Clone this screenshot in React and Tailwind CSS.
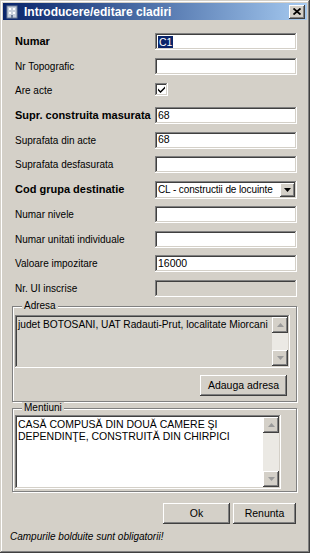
import React from 'react';

const raised =
  'bg-[#d4d0c8] shadow-[inset_-1px_-1px_0_#404040,inset_1px_1px_0_#fff,inset_-2px_-2px_0_#808080,inset_2px_2px_0_#d4d0c8]';
const sunken =
  'shadow-[inset_-1px_-1px_0_#fff,inset_1px_1px_0_#808080,inset_-2px_-2px_0_#d4d0c8,inset_2px_2px_0_#404040]';
const etched = 'border border-[#808080] shadow-[inset_1px_1px_0_#fff,1px_1px_0_#fff]';

function Arrow({ down = false, color = '#000' }) {
  return (
    <svg width="7" height="4" viewBox="0 0 7 4">
      <path d={down ? 'M0 0h7L3.5 4z' : 'M0 4h7L3.5 0z'} fill={color} />
    </svg>
  );
}

function ScrollButton({ down }) {
  return (
    <div className={`flex h-[16px] w-[16px] items-center justify-center ${raised}`}>
      <Arrow down={down} color="#9a9a9a" />
    </div>
  );
}

function ScrollBar() {
  return (
    <div className="flex w-[16px] shrink-0 flex-col">
      <ScrollButton />
      <div className="flex-1 bg-[#ebe9e4]" />
      <ScrollButton down />
    </div>
  );
}

function Field({ value, selected, disabled }) {
  return (
    <div
      className={`flex h-[17px] w-[142px] items-center px-[3px] text-[10.5px] ${sunken} ${
        disabled ? 'bg-[#d4d0c8]' : 'bg-white'
      }`}
    >
      {selected ? <span className="bg-[#0a246a] px-[1px] leading-[12px] text-white">{value}</span> : value}
    </div>
  );
}

function Row({ label, bold, children }) {
  return (
    <div className="flex h-[17px] items-center">
      <div className={`w-[143px] pl-[3px] ${bold ? 'text-[11px] font-bold' : 'text-[10px]'}`}>{label}</div>
      {children}
    </div>
  );
}

export default function App() {
  const rows = [
    { label: 'Numar', bold: true, value: 'C1', selected: true },
    { label: 'Nr Topografic' },
    { label: 'Are acte', check: true },
    { label: 'Supr. construita masurata', bold: true, value: '68' },
    { label: 'Suprafata din acte', value: '68' },
    { label: 'Suprafata desfasurata' },
    { label: 'Cod grupa destinatie', bold: true, select: 'CL - constructii de locuinte' },
    { label: 'Numar nivele' },
    { label: 'Numar unitati individuale' },
    { label: 'Valoare impozitare', value: '16000' },
    { label: 'Nr. UI inscrise', disabled: true },
  ];

  return (
    <div
      className="flex h-[553px] w-[310px] flex-col bg-[#d4d0c8] p-[3px] text-black shadow-[inset_-1px_-1px_0_#404040,inset_1px_1px_0_#d4d0c8,inset_-2px_-2px_0_#808080,inset_2px_2px_0_#fff]"
      style={{ fontFamily: '"Liberation Sans", Arial, sans-serif' }}
    >
      {/* title bar */}
      <div className="flex h-[17px] items-center bg-linear-to-r from-[#0a246a] to-[#a6caf0] pl-[2px] pr-[2px]">
        <svg width="14" height="14" viewBox="0 0 14 14" className="mr-[5px]">
          <rect x="2" y="1" width="10" height="12" fill="#c8d0dc" stroke="#6f7f99" />
          <rect x="4" y="3" width="2" height="2" fill="#ffffff" />
          <rect x="8" y="3" width="2" height="2" fill="#ffffff" />
          <rect x="4" y="7" width="2" height="2" fill="#ffffff" />
          <rect x="8" y="7" width="2" height="2" fill="#ffffff" />
          <rect x="6" y="10" width="2" height="3" fill="#6f7f99" />
        </svg>
        <span className="text-[12px] font-bold text-white">Introducere/editare cladiri</span>
        <div className={`ml-auto flex h-[14px] w-[16px] items-center justify-center ${raised}`}>
          <svg width="8" height="7" viewBox="0 0 8 7">
            <path d="M0.5 0.5l7 6M7.5 0.5l-7 6" stroke="#000" strokeWidth="1.8" />
          </svg>
        </div>
      </div>

      {/* content */}
      <div className="flex flex-1 flex-col pl-[9px] pr-[10px]">
        <div className="mt-[13px] flex flex-col gap-[7.7px]">
          {rows.map((r) => (
            <Row key={r.label} label={r.label} bold={r.bold}>
              {r.check ? (
                <div className={`-mt-[3px] flex h-[13px] w-[13px] items-center justify-center bg-white ${sunken}`}>
                  <svg width="7" height="7" viewBox="0 0 7 7">
                    <path d="M0 2.5l2.5 2.5L7 0.5v2L2.5 7 0 4.5z" fill="#000" />
                  </svg>
                </div>
              ) : r.select ? (
                <div className={`flex h-[18px] w-[142px] items-center bg-white p-[2px] ${sunken}`}>
                  <span className="flex-1 whitespace-nowrap pl-[1px] text-[10px] tracking-[-0.1px]">{r.select}</span>
                  <div className={`flex h-[14px] w-[15px] shrink-0 items-center justify-center ${raised}`}>
                    <Arrow down />
                  </div>
                </div>
              ) : (
                <Field value={r.value} selected={r.selected} disabled={r.disabled} />
              )}
            </Row>
          ))}
        </div>

        {/* Adresa */}
        <div className={`relative mt-[9px] flex h-[96px] flex-col ${etched}`}>
          <span className="absolute -top-[7px] left-[9px] bg-[#d4d0c8] px-[2px] text-[10px] leading-[12px]">
            Adresa
          </span>
          <div className={`ml-[2px] mt-[8px] flex h-[53px] w-[275px] bg-[#d6d3cc] p-[2px] ${sunken}`}>
            <div className="flex-1 overflow-hidden whitespace-nowrap pl-[1px] pt-[1px] text-[10.2px] leading-[13px]">
              judet BOTOSANI, UAT Radauti-Prut, localitate Miorcani
            </div>
            <ScrollBar />
          </div>
          <div className="mt-[7px] flex justify-end pr-[9px]">
            <div className={`flex h-[21px] w-[87px] items-center justify-center text-[10.5px] ${raised}`}>
              Adauga adresa
            </div>
          </div>
        </div>

        {/* Mentiuni */}
        <div className={`relative mt-[6px] h-[84px] ${etched}`}>
          <span className="absolute -top-[7px] left-[9px] bg-[#d4d0c8] px-[2px] text-[10px] leading-[12px]">
            Mentiuni
          </span>
          <div className={`ml-[2px] mt-[6px] flex h-[74px] w-[266px] bg-white p-[2px] ${sunken}`}>
            <div className="flex-1 pl-[1px] pt-[1px] text-[10.5px] leading-[12.5px]">
              CASĂ COMPUSĂ DIN DOUĂ CAMERE ŞI
              <br />
              DEPENDINŢE, CONSTRUITĂ DIN CHIRPICI
            </div>
            <ScrollBar />
          </div>
        </div>

        {/* buttons */}
        <div className="mt-[11px] flex justify-end gap-[3px] pr-[1px]">
          <div className={`flex h-[21px] w-[67px] items-center justify-center text-[10.5px] ${raised}`}>Ok</div>
          <div className={`flex h-[21px] w-[63px] items-center justify-center text-[10.5px] ${raised}`}>Renunta</div>
        </div>

        <div className="mt-[6px] -ml-[2px] text-[10px] italic leading-[14px]">Campurile bolduite sunt obligatorii!</div>
      </div>
    </div>
  );
}
